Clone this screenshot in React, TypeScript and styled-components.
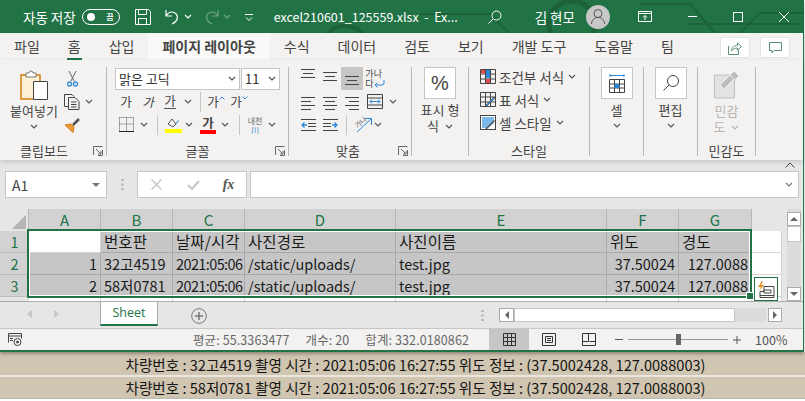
import React from 'react'
import styled, { createGlobalStyle } from 'styled-components'

const FONT = `'Noto Sans CJK KR', 'Noto Sans', sans-serif`
const GREEN = '#217346'
const BLUE = '#2b88d8'

const Global = createGlobalStyle`
    html, body { margin: 0; background: #fff; overflow: hidden; }
    * { box-sizing: border-box; }
    #root { width: 805px; height: 401px; font-family: ${FONT}; }
`

const Window = styled.div`
    position: relative;
    z-index: 2;
    width: 804px;
    height: 352px;
    background: #f3f2f1;
    border-right: 1px solid ${GREEN};
    border-bottom: 2px solid ${GREEN};
    box-shadow: 0 2px 3px rgba(0,0,0,.3);
`

/* title bar */
const TitleBar = styled.header`
    position: relative;
    height: 33px;
    background: ${GREEN};
    color: #fff;
    display: flex;
    align-items: center;
    padding-left: 23px;
    font-size: 12.5px;
    overflow: hidden;
`
const Pattern = styled.svg`
    position: absolute;
    left: 0;
    top: 0;
    pointer-events: none;
`
const TitleItem = styled.div<{ $ml?: number; $big?: boolean }>`
    position: relative;
    flex: none;
    margin-left: ${p => p.$ml ?? 0}px;
    font-size: ${p => (p.$big ? '13.5px' : 'inherit')};
    display: flex;
    align-items: center;
    justify-content: center;
    white-space: pre;
`
const Toggle = styled.div`
    width: 38px;
    height: 16px;
    border: 1px solid #fff;
    border-radius: 8px;
    display: flex;
    align-items: center;
    justify-content: space-between;
    padding: 0 5px 0 4px;
    font-size: 8px;
    font-weight: 700;
    &::before {
        content: '';
        width: 8px;
        height: 8px;
        border-radius: 50%;
        background: #fff;
    }
`
const Avatar = styled.div`
    width: 24px;
    height: 24px;
    border-radius: 50%;
    background: #c8c8c8;
    display: flex;
    align-items: center;
    justify-content: center;
`

/* tabs */
const TabRow = styled.nav`
    height: 27px;
    display: flex;
    align-items: flex-start;
    padding-right: 13px;
    position: relative;
`
const Tab = styled.div<{ $active?: boolean; $current?: boolean }>`
    position: relative;
    height: 27px;
    padding: 0 14px;
    line-height: 26px;
    font-size: 14px;
    color: #444;
    background: ${p => (p.$active ? '#f9f9f8' : 'transparent')};
    font-weight: ${p => (p.$active ? 700 : 400)};
    white-space: pre;
    &::after {
        content: '';
        display: ${p => (p.$current ? 'block' : 'none')};
        position: absolute;
        left: 13px;
        right: 13px;
        bottom: 0;
        height: 2px;
        background: ${GREEN};
    }
`
const TabAction = styled.div<{ $ml?: string }>`
    margin-top: 4px;
    margin-left: ${p => p.$ml ?? '10px'};
    width: 30px;
    height: 21px;
    background: #fff;
    border: 1px solid #e4e4e4;
    border-radius: 2px;
    display: flex;
    align-items: center;
    justify-content: center;
`

/* ribbon */
const Ribbon = styled.section`
    position: relative;
    z-index: 1;
    height: 100px;
    padding-top: 7px;
    display: flex;
    align-items: flex-start;
    background: #f3f2f1;
    box-shadow: 0 2px 5px rgba(0,0,0,.14);
`
const Group = styled.div<{ $w: number }>`
    position: relative;
    flex: none;
    width: ${p => p.$w}px;
    height: 89px;
    border-right: 1px solid #b9b9b8;
    display: flex;
    flex-direction: column;
`
const GroupBody = styled.div`
    height: 78px;
    display: flex;
`
const GroupLabel = styled.div<{ $mr?: number }>`
    margin-top: 1px;
    margin-right: ${p => p.$mr ?? 0}px;
    text-align: center;
    font-size: 13px;
    line-height: 10px;
    height: 10px;
    color: #444;
    white-space: pre;
`
const Launcher = styled.div`
    position: absolute;
    right: 1px;
    bottom: -1px;
    width: 14px;
    height: 12px;
    display: flex;
    align-items: center;
    justify-content: center;
`
const LargeCol = styled.div<{ $w?: number; $pl?: number }>`
    flex: none;
    width: ${p => (p.$w ? `${p.$w}px` : '100%')};
    padding-left: ${p => p.$pl ?? 0}px;
    display: flex;
    flex-direction: column;
    align-items: center;
`
const BigText = styled.div<{ $dim?: boolean }>`
    font-size: 13px;
    line-height: 16px;
    height: 16px;
    color: ${p => (p.$dim ? '#b5b5b5' : '#444')};
    white-space: pre;
    display: flex;
    align-items: center;
    gap: 3px;
`
const ChevRow = styled.div`
    height: 14px;
    display: flex;
    align-items: center;
`
const Tile = styled.div`
    width: 32px;
    height: 32px;
    background: #fff;
    border: 1px solid #c6c6c6;
    display: flex;
    align-items: center;
    justify-content: center;
    margin-bottom: 3px;
`
const Percent = styled.span`
    font-family: 'Liberation Sans', sans-serif;
    font-size: 20px;
    color: #444;
`
const Rows = styled.div<{ $pl?: number; $mt?: number }>`
    display: grid;
    grid-auto-rows: 23px;
    padding-left: ${p => p.$pl ?? 0}px;
    margin-top: ${p => p.$mt ?? 0}px;
`
const Row = styled.div`
    display: flex;
    align-items: center;
`
const Tool = styled.div<{ $w: number; $on?: boolean; $ml?: number }>`
    flex: none;
    width: ${p => p.$w}px;
    height: 23px;
    margin-left: ${p => p.$ml ?? 0}px;
    display: flex;
    align-items: center;
    justify-content: center;
    background: ${p => (p.$on ? '#c6c6c6' : 'transparent')};
    font-size: 12.5px;
    color: #444;
    position: relative;
`
const VSep = styled.div<{ $mx: number }>`
    flex: none;
    width: 1px;
    height: 20px;
    background: #c6c6c6;
    margin: 0 ${p => p.$mx}px;
`
const Combo = styled.div<{ $w: number; $ml?: number }>`
    flex: none;
    width: ${p => p.$w}px;
    height: 22px;
    margin-left: ${p => p.$ml ?? 0}px;
    background: #fff;
    border: 1px solid #c6c6c6;
    display: flex;
    align-items: center;
    justify-content: space-between;
    padding: 0 3px;
    font-size: 13px;
    color: #333;
`
const GlyphUnder = styled.span`
    border-bottom: 1px solid #555;
    line-height: 14px;
`
const Caret = styled.svg`
    margin-bottom: 8px;
`
const Swatch = styled.div<{ $c: string }>`
    display: flex;
    flex-direction: column;
    align-items: center;
    width: 16px;
    line-height: 14px;
    font-weight: 700;
    &::after {
        content: '';
        width: 16px;
        height: 4px;
        background: ${p => p.$c};
    }
`
const TinyStack = styled.div`
    font-size: 8px;
    line-height: 9px;
    color: #666;
    text-align: center;
`
const TinyBlue = styled.div`
    color: ${BLUE};
`
const WrapStack = styled.div`
    font-size: 9px;
    line-height: 10px;
    color: #444;
    display: flex;
    flex-direction: column;
    align-items: flex-start;
`
const WrapLine = styled.div`
    display: flex;
    align-items: center;
`
const Slant = styled.span`
    font-size: 7px;
    color: #666;
    transform: rotate(-40deg);
    position: absolute;
    left: 2px;
    top: 4px;
`
const StyleText = styled.div`
    margin-left: 3px;
    font-size: 13.5px;
    color: #444;
    display: flex;
    align-items: center;
    gap: 4px;
    white-space: pre;
`
const Collapse = styled.div`
    margin-left: auto;
    margin-right: 8px;
    margin-top: 82px;
`

/* formula bar */
const FormulaArea = styled.section`
    height: 49px;
    background: #e6e6e6;
    display: flex;
    align-items: flex-start;
    padding: 11px 0 0 5px;
`
const NameBox = styled.div`
    width: 102px;
    height: 27px;
    background: #fff;
    border: 1px solid #c6c6c6;
    display: flex;
    align-items: center;
    justify-content: space-between;
    padding: 0 6px;
    font-size: 14px;
    color: #444;
`
const Grip = styled.div`
    margin: 0 13px 0 14px;
    height: 27px;
    display: flex;
    align-items: center;
`
const FormulaTools = styled.div`
    width: 110px;
    height: 27px;
    background: #fff;
    border: 1px solid #c6c6c6;
    display: grid;
    grid-template-columns: 37px 36px 1fr;
    align-items: center;
    justify-items: center;
`
const Fx = styled.span`
    font-family: 'Liberation Serif', serif;
    font-style: italic;
    font-weight: 700;
    font-size: 14px;
    color: #555;
`
const FormulaInput = styled.div`
    margin-left: 3px;
    width: 549px;
    height: 27px;
    background: #fff;
    border: 1px solid #c6c6c6;
    display: flex;
    align-items: center;
    justify-content: flex-end;
    padding-right: 5px;
`

/* sheet */
const SheetArea = styled.section`
    height: 92px;
    background: #e6e6e6;
    display: flex;
`
const Sheet = styled.div`
    position: relative;
    width: 782px;
    height: 92px;
    overflow: hidden;
    background: #fff;
    display: grid;
    grid-template-columns: 29px 72px 72px 72px 151px 211px 72px 73px 30px;
    grid-template-rows: 22px 22px 22px 22px 22px;
    font-size: 14.5px;
    color: #1a1a1a;
`
const Corner = styled.div`
    background: #e6e6e6;
    position: relative;
    border-right: 1px solid #b5b5b5;
    &::after {
        content: '';
        position: absolute;
        right: 2px;
        bottom: 2px;
        border-style: solid;
        border-width: 0 0 14px 14px;
        border-color: transparent transparent #b4b4b4 transparent;
    }
`
const ColHead = styled.div<{ $off?: boolean }>`
    background: ${p => (p.$off ? '#e6e6e6' : '#d2d2d2')};
    border-right: 1px solid ${p => (p.$off ? '#e6e6e6' : '#b5b5b5')};
    color: ${GREEN};
    text-align: center;
    line-height: 22px;
    font-size: 15px;
`
const RowHead = styled.div<{ $off?: boolean }>`
    background: ${p => (p.$off ? '#e6e6e6' : '#d2d2d2')};
    border-bottom: 1px solid #bdbdbd;
    color: ${GREEN};
    text-align: center;
    line-height: 21px;
    font-size: 14.5px;
`
const Cell = styled.div<{ $sel?: boolean; $right?: boolean; $head?: boolean; $tight?: boolean }>`
    background: ${p => (p.$sel ? '#c6c6c6' : '#fff')};
    border-right: 1px solid ${p => (p.$sel ? '#a9a9a9' : '#d4d4d4')};
    border-bottom: 1px solid ${p => (p.$sel ? '#a9a9a9' : '#d4d4d4')};
    text-align: ${p => (p.$right ? 'right' : 'left')};
    padding: 0 3px;
    line-height: 21px;
    white-space: nowrap;
    overflow: hidden;
    font-size: ${p => (p.$head ? '15.5px' : '14.5px')};
    letter-spacing: ${p => (p.$head ? '0.1px' : p.$tight ? '-0.6px' : '0')};
`
const Selection = styled.div`
    position: absolute;
    left: 27px;
    top: 20px;
    width: 725px;
    height: 69px;
    border: 2px solid ${GREEN};
    box-shadow: inset 0 0 0 1px #fff;
    pointer-events: none;
`
const Handle = styled.div`
    position: absolute;
    left: 747px;
    top: 84px;
    width: 6px;
    height: 6px;
    background: ${GREEN};
    outline: 1px solid #fff;
`
const QuickButton = styled.div`
    position: absolute;
    left: 754px;
    top: 68px;
    width: 24px;
    height: 24px;
    background: #fff;
    border: 1px solid ${GREEN};
    display: flex;
    align-items: center;
    justify-content: center;
`
const VScroll = styled.div`
    margin-left: 5px;
    width: 14px;
    height: 92px;
    padding-top: 3px;
    display: flex;
    flex-direction: column;
    background: #dcdcdc;
`
const ScrollBtn = styled.div<{ $w?: number; $ml?: number }>`
    flex: none;
    width: ${p => (p.$w ? `${p.$w}px` : '100%')};
    height: 14px;
    margin-left: ${p => p.$ml ?? 0}px;
    background: #fff;
    border: 1px solid #ababab;
    display: flex;
    align-items: center;
    justify-content: center;
`
const ScrollThumb = styled.div`
    flex: none;
    width: 100%;
    height: 16px;
    background: #fff;
    border: 1px solid #c6c6c6;
`
const ScrollGap = styled.div`
    flex: 1;
`

/* sheet tabs */
const TabsBar = styled.section`
    height: 28px;
    display: flex;
    align-items: flex-start;
    background: #e6e6e6;
    border-top: 1px solid #ababab;
    border-bottom: 1px solid #c6c6c6;
`
const NavArrows = styled.div`
    width: 100px;
    height: 24px;
    display: flex;
    align-items: center;
    padding-left: 27px;
    gap: 22px;
`
const SheetTab = styled.div`
    margin-top: -1px;
    width: 58px;
    height: 25px;
    background: #fff;
    border: 1px solid #ababab;
    border-bottom: 2px solid ${GREEN};
    color: ${GREEN};
    font-size: 12.5px;
    font-family: 'Open Sans', sans-serif;
    text-align: center;
    line-height: 22px;
`
const AddSheet = styled.div`
    margin-left: 33px;
    margin-top: 3px;
`
const HScroll = styled.div`
    margin-left: auto;
    margin-right: 21px;
    margin-top: 6px;
    display: flex;
    align-items: center;
`
const HGrip = styled.div`
    margin-right: 15px;
    display: flex;
`
const HTrack = styled.div`
    width: 252px;
    height: 14px;
    background: #dcdcdc;
`
const HThumb = styled.div`
    width: 221px;
    height: 14px;
    background: #fff;
    border: 1px solid #c6c6c6;
`

/* status bar */
const StatusBar = styled.footer`
    height: 21px;
    display: flex;
    align-items: center;
    font-size: 12.5px;
    color: #666;
    padding-left: 8px;
`
const Stat = styled.span<{ $ml: number }>`
    margin-left: ${p => p.$ml}px;
    white-space: pre;
    letter-spacing: 0.1px;
`
const ViewBtn = styled.div<{ $on?: boolean; $first?: boolean }>`
    flex: none;
    width: 40px;
    height: 21px;
    margin-left: ${p => (p.$first ? 'auto' : '0')};
    background: ${p => (p.$on ? '#c6c6c6' : 'transparent')};
    display: flex;
    align-items: center;
    justify-content: center;
`
const Zoom = styled.div`
    flex: none;
    width: 194px;
    padding-left: 6px;
    display: flex;
    align-items: center;
    color: #555;
`
const Slider = styled.div`
    position: relative;
    width: 100px;
    height: 1px;
    margin: 0 5px;
    background: #999;
    &::after {
        content: '';
        position: absolute;
        left: 48px;
        top: -5px;
        width: 5px;
        height: 11px;
        background: #666;
    }
`

/* log rows under the window */
const Log = styled.div`
    position: relative;
    z-index: 1;
    display: flex;
    flex-direction: column;
`
const LogRow = styled.div`
    background: #d0c5b0;
    color: #141414;
    text-align: center;
    font-size: 14.6px;
    white-space: pre;
    padding-left: 26px;
    height: 22px;
    line-height: 21px;
    border-bottom: 1px solid #b9b9b5;
    &:first-child {
        height: 25px;
        padding-top: 2px;
        border-bottom: 2px solid #e9e6e0;
    }
`

/* icons */
const Chev = ({ c = '#555' }: { c?: string }) => (
    <svg width="8" height="5" viewBox="0 0 8 5"><path d="M1 1l3 3 3-3" fill="none" stroke={c} strokeWidth="1.2" /></svg>
)
const LaunchIcon = () => (
    <svg width="10" height="10" viewBox="0 0 10 10" fill="none" stroke="#666"><path d="M.5 9V.5H9.500M9.500 4v5.500H5M3 3l5 5M8 5v3H5" /></svg>
)
const Lines = ({ rows, w = 14, y = 0 }: { rows: [number, number][]; w?: number; y?: number }) => (
    <svg width={w} height="16" viewBox={`0 0 ${w} 16`} style={{ transform: `translateY(${y}px)` }}>
        {rows.map(([a, b], i) => <rect key={i} x={a} y={2 + i * 4} width={b - a} height="1" fill="#444" />)}
    </svg>
)
const Indent = ({ flip }: { flip?: boolean }) => (
    <svg width="15" height="14" viewBox="0 0 15 14" style={{ transform: flip ? 'scaleX(-1)' : undefined }}>
        <path d="M0 1.500h15M7 5.500h8M7 8.500h8M0 12.500h15" stroke="#444" fill="none" />
        <path d="M1 7h5M3.500 4.500L1 7l2.500 2.500" stroke={BLUE} fill="none" strokeWidth="1.300" />
    </svg>
)
const GridIcon = ({ children }: { children: React.ReactNode }) => (
    <svg width="16" height="15" viewBox="0 0 16 15" fill="none">
        <path d="M.5.500h15v14H.5zM.5 5h15M.5 10h15M5.500.500v14M10.500.500v14" stroke="#444" />
        {children}
    </svg>
)
const GripDots = () => (
    <svg width="3" height="11" viewBox="0 0 3 11" fill="#bbb"><rect width="3" height="2" /><rect y="4.500" width="3" height="2" /><rect y="9" width="3" height="2" /></svg>
)
const Launch = () => <Launcher><LaunchIcon /></Launcher>

const COLS = ['A', 'B', 'C', 'D', 'E', 'F', 'G']
const DATA = [
    ['1', '32고4519', '2021:05:06', '/static/uploads/', 'test.jpg', '37.50024', '127.0088'],
    ['2', '58저0781', '2021:05:06', '/static/uploads/', 'test.jpg', '37.50024', '127.0088'],
]
const HEADINGS = ['', '번호판', '날짜/시각', '사진경로', '사진이름', '위도', '경도']
const TABS = ['파일', '홈', '삽입', '페이지 레이아웃', '수식', '데이터', '검토', '보기', '개발 도구', '도움말', '팀']
const LOGS = [
    '차량번호 : 32고4519 촬영 시간 : 2021:05:06 16:27:55 위도 정보 : (37.5002428, 127.0088003)',
    '차량번호 : 58저0781 촬영 시간 : 2021:05:06 16:27:55 위도 정보 : (37.5002428, 127.0088003)',
]

export default function App() {
    return (
        <>
            <Global />
            <Window>
                <TitleBar>
                    <Pattern width="804" height="33" viewBox="0 0 804 33" fill="none" stroke="#1c6139" strokeWidth="2">
                        <circle cx="572" cy="24" r="23" strokeWidth="5" />
                        <circle cx="345" cy="50" r="24" strokeWidth="4" />
                        <path d="M420 14h70l19 19M640 4h50l25 29M690 24h110M740 33l20-20h44" />
                    </Pattern>
                    <TitleItem $big>자동 저장</TitleItem>
                    <TitleItem $ml={6}><Toggle>끔</Toggle></TitleItem>
                    <TitleItem $ml={15}>
                        <svg width="16" height="16" viewBox="0 0 16 16" fill="none" stroke="#fff"><path d="M.5.500h13l2 2v13H.5zM3.500.500v5h8v-5M3.500 15.500v-6h8v6" /></svg>
                    </TitleItem>
                    <TitleItem $ml={14}>
                        <svg width="15" height="16" viewBox="0 0 15 16" fill="none" stroke="#fff" strokeWidth="1.200"><path d="M1 1v6h6M1 7c2-4 6-5 9-3 4 3 3 8-3 11" /></svg>
                    </TitleItem>
                    <TitleItem $ml={4}><Chev c="#fff" /></TitleItem>
                    <TitleItem $ml={12}>
                        <svg width="15" height="16" viewBox="0 0 15 16" fill="none" stroke="#6fa288" strokeWidth="1.200"><path d="M14 1v6H8M14 7c-2-4-6-5-9-3-4 3-3 8 3 11" /></svg>
                    </TitleItem>
                    <TitleItem $ml={4}><Chev c="#6fa288" /></TitleItem>
                    <TitleItem $ml={14}>
                        <svg width="8" height="8" viewBox="0 0 8 8" fill="none" stroke="#fff"><path d="M0 1.500h8M1 4.500l3 3 3-3" /></svg>
                    </TitleItem>
                    <TitleItem $ml={21}>excel210601_125559.xlsx  -  Ex...</TitleItem>
                    <TitleItem $ml={30}>
                        <svg width="14" height="14" viewBox="0 0 14 14" fill="none" stroke="#fff"><circle cx="8.500" cy="5.500" r="4.500" /><path d="M5 9l-4.500 4.500" /></svg>
                    </TitleItem>
                    <TitleItem $ml={33} $big>김 현모</TitleItem>
                    <TitleItem $ml={11}>
                        <Avatar>
                            <svg width="14" height="15" viewBox="0 0 14 15" fill="none" stroke="#555"><circle cx="7" cy="4.500" r="4" /><path d="M.5 15c0-4 3-6.500 6.500-6.500s6.500 2.500 6.500 6.500" /></svg>
                        </Avatar>
                    </TitleItem>
                    <TitleItem $ml={28}>
                        <svg width="14" height="11" viewBox="0 0 14 11" fill="none" stroke="#fff"><path d="M.5.500h13v10H.5zM.5 2.500h13M7 9V4.500M5 6.500l2-2 2 2" /></svg>
                    </TitleItem>
                    <TitleItem $ml={36}>
                        <svg width="9" height="1" viewBox="0 0 9 1"><rect width="9" height="1" fill="#fff" /></svg>
                    </TitleItem>
                    <TitleItem $ml={36}>
                        <svg width="10" height="10" viewBox="0 0 10 10" fill="none" stroke="#fff"><rect x=".5" y=".5" width="9" height="9" /></svg>
                    </TitleItem>
                    <TitleItem $ml={36}>
                        <svg width="10" height="10" viewBox="0 0 10 10" fill="none" stroke="#fff"><path d="M0 0l10 10M10 0L0 10" /></svg>
                    </TitleItem>
                </TitleBar>

                <TabRow>
                    {TABS.map((t, i) => <Tab key={t} $active={i === 3} $current={i === 1}>{t}</Tab>)}
                    <TabAction $ml="auto">
                        <svg width="14" height="14" viewBox="0 0 14 14" fill="none" stroke="#5a8f73"><path d="M.5 5v8.500h10V9M3.500 10c0-4 3-5.500 6-5.500V2l4 3.500-4 3.500V7C7 7 5 8 3.500 10z" /></svg>
                    </TabAction>
                    <TabAction>
                        <svg width="13" height="13" viewBox="0 0 13 13" fill="none" stroke="#5a8f73"><path d="M.5 1.500h12v8H5l-2 2.500V9.500H.5z" /></svg>
                    </TabAction>
                </TabRow>

                <Ribbon>
                    <Group $w={107}>
                        <GroupBody>
                            <LargeCol $w={64} $pl={4}>
                                <svg width="28" height="31" viewBox="0 0 28 31" style={{ marginTop: 3, marginBottom: 2 }}>
                                    <path d="M1 5h19v24H1z" fill="#fdf0d5" stroke="#d47c15" strokeWidth="1.500" />
                                    <path d="M6 3h3a2 2 0 0 1 4 0h3v4H6z" fill="#fff" stroke="#777" />
                                    <path d="M13.500 11.500h14v18h-14z" fill="#fff" stroke="#444" />
                                </svg>
                                <BigText>붙여넣기</BigText>
                                <ChevRow><Chev /></ChevRow>
                            </LargeCol>
                            <Rows>
                                <Row>
                                    <Tool $w={16}>
                                        <svg width="11" height="16" viewBox="0 0 11 16" fill="none"><path d="M2 0l5 10M9 0L4 10" stroke="#666" /><circle cx="2.500" cy="13" r="2" stroke={BLUE} strokeWidth="1.300" /><circle cx="8.500" cy="13" r="2" stroke={BLUE} strokeWidth="1.300" /></svg>
                                    </Tool>
                                </Row>
                                <Row>
                                    <Tool $w={16}>
                                        <svg width="16" height="16" viewBox="0 0 16 16" fill="none" stroke="#444"><path d="M4 12.500H.5V.5H8l2 2M4.500 3.500H11l4 4v8H4.500zM7 8h5.500M7 10.500h5.500M7 13h5.500" /></svg>
                                    </Tool>
                                    <Tool $w={18}><Chev /></Tool>
                                </Row>
                                <Row>
                                    <Tool $w={16}>
                                        <svg width="16" height="16" viewBox="0 0 16 16" fill="none"><path d="M1 8l6-1 3 3-1 5.500L1 8z" fill="#ed9a3a" stroke="#d47c15" /><path d="M9 8l6-6" stroke="#555" strokeWidth="2.500" /></svg>
                                    </Tool>
                                </Row>
                            </Rows>
                        </GroupBody>
                        <GroupLabel $mr={18}>클립보드</GroupLabel>
                        <Launch />
                    </Group>

                    <Group $w={182}>
                        <GroupBody>
                            <Rows $pl={8}>
                                <Row>
                                    <Combo $w={125}>맑은 고딕<Chev /></Combo>
                                    <Combo $w={39} $ml={1}>11<Chev /></Combo>
                                </Row>
                                <Row>
                                    <Tool $w={22}>가</Tool>
                                    <Tool $w={22}><i>가</i></Tool>
                                    <Tool $w={22}><GlyphUnder>가</GlyphUnder></Tool>
                                    <Tool $w={14}><Chev /></Tool>
                                    <VSep $mx={5} />
                                    <Tool $w={20}>가<Caret width="6" height="4" viewBox="0 0 6 4"><path d="M.5 3.500L3 1l2.500 2.500" stroke={BLUE} fill="none" /></Caret></Tool>
                                    <Tool $w={20} $ml={3}>가<Caret width="6" height="4" viewBox="0 0 6 4"><path d="M.5.500L3 3 5.500.500" stroke={BLUE} fill="none" /></Caret></Tool>
                                </Row>
                                <Row>
                                    <Tool $w={22}>
                                        <svg width="15" height="15" viewBox="0 0 15 15" fill="none"><path d="M.5.500h14v13M.5.500v13M.5 7h14M7.500.500v13" stroke="#555" strokeDasharray="1 1" /><path d="M0 14.500h15" stroke="#222" /></svg>
                                    </Tool>
                                    <Tool $w={14}><Chev /></Tool>
                                    <VSep $mx={6} />
                                    <Tool $w={18}>
                                        <svg width="17" height="16" viewBox="0 0 17 16" fill="none"><path d="M3 7l4-5 4 5-3 3z" stroke="#555" /><path d="M12 7a2 2 0 0 1 2-3" stroke={BLUE} /><rect y="12" width="17" height="4" fill="#ffff00" /></svg>
                                    </Tool>
                                    <Tool $w={14}><Chev /></Tool>
                                    <Tool $w={18} $ml={3}><Swatch $c="#ff0000">가</Swatch></Tool>
                                    <Tool $w={16}><Chev /></Tool>
                                    <VSep $mx={6} />
                                    <Tool $w={18}><TinyStack>내천<TinyBlue>川</TinyBlue></TinyStack></Tool>
                                    <Tool $w={16}><Chev /></Tool>
                                </Row>
                            </Rows>
                        </GroupBody>
                        <GroupLabel>글꼴</GroupLabel>
                        <Launch />
                    </Group>

                    <Group $w={123}>
                        <GroupBody>
                            <Rows $pl={8}>
                                <Row>
                                    <Tool $w={22}><Lines rows={[[0, 14], [2, 12], [0, 14]]} y={-4} /></Tool>
                                    <Tool $w={22}><Lines rows={[[0, 14], [2, 12], [0, 14]]} y={-1} /></Tool>
                                    <Tool $w={22} $on><Lines rows={[[0, 14], [2, 12], [0, 14]]} y={3} /></Tool>
                                    <Tool $w={24}>
                                        <WrapStack>
                                            가나
                                            <WrapLine>다<svg width="11" height="8" viewBox="0 0 11 8" fill="none" stroke={BLUE}><path d="M10 0v3a2 2 0 0 1-2 2H1M3.500 2.500L1 5l2.500 2.500" /></svg></WrapLine>
                                        </WrapStack>
                                    </Tool>
                                </Row>
                                <Row>
                                    <Tool $w={22}><Lines rows={[[0, 14], [0, 10], [0, 14], [0, 10]]} y={1} /></Tool>
                                    <Tool $w={22}><Lines rows={[[0, 14], [2, 12], [0, 14], [2, 12]]} y={1} /></Tool>
                                    <Tool $w={22}><Lines rows={[[0, 14], [4, 14], [0, 14], [4, 14]]} y={1} /></Tool>
                                    <Tool $w={24}>
                                        <svg width="16" height="15" viewBox="0 0 16 15" fill="none"><path d="M.5.500h15v14H.5z" stroke="#444" /><path d="M.5 4h15M.5 11h15" stroke="#444" /><path d="M3 7.500h10M5 5.500l-2 2 2 2M11 5.500l2 2-2 2" stroke={BLUE} /></svg>
                                    </Tool>
                                    <Tool $w={12}><Chev /></Tool>
                                </Row>
                                <Row>
                                    <Tool $w={22}><Indent /></Tool>
                                    <Tool $w={22}><Indent flip /></Tool>
                                    <VSep $mx={5} />
                                    <Tool $w={22}>
                                        <Slant>가나</Slant>
                                        <svg width="22" height="18" viewBox="0 0 22 18" fill="none"><path d="M5 16L19 3M13 2.500h6.500V9" stroke={BLUE} /></svg>
                                    </Tool>
                                    <Tool $w={8}><Chev /></Tool>
                                </Row>
                            </Rows>
                        </GroupBody>
                        <GroupLabel $mr={4}>맞춤</GroupLabel>
                        <Launch />
                    </Group>

                    <Group $w={57}>
                        <LargeCol>
                            <Tile><Percent>%</Percent></Tile>
                            <BigText>표시 형</BigText>
                            <BigText>식 <Chev /></BigText>
                        </LargeCol>
                    </Group>

                    <Group $w={121}>
                        <GroupBody>
                            <Rows $pl={11} $mt={-2}>
                                <Row>
                                    <GridIcon><rect x="6" y="1" width="4" height="8" fill={BLUE} /><rect x="6" y="10" width="4" height="4" fill="#e8474c" /><rect x="1" y="1" width="4" height="3.500" fill="#e8474c" /></GridIcon>
                                    <StyleText>조건부 서식<Chev /></StyleText>
                                </Row>
                                <Row>
                                    <GridIcon><path d="M5 14L14 5l1 1-8 8z" fill={BLUE} stroke="#444" strokeWidth=".5" /></GridIcon>
                                    <StyleText>표 서식<Chev /></StyleText>
                                </Row>
                                <Row>
                                    <svg width="16" height="15" viewBox="0 0 16 15" fill="none"><rect x=".5" y=".5" width="15" height="14" fill="#fff" stroke="#444" /><path d="M2 2h12v6l-6 5H2z" fill="#7db7e8" /><path d="M5 14L14 5l1 1-8 8z" fill="#555" /></svg>
                                    <StyleText>셀 스타일<Chev /></StyleText>
                                </Row>
                            </Rows>
                        </GroupBody>
                        <GroupLabel>스타일</GroupLabel>
                    </Group>

                    <Group $w={54}>
                        <LargeCol>
                            <Tile>
                                <svg width="16" height="19" viewBox="0 0 16 19" fill="none"><path d="M1 1.500h14M1 0v3M15 0v3" stroke={BLUE} /><path d="M.5 5.500h15v13H.5zM.5 10h15M.5 14h15M5.500 5.500v13M10.500 5.500v13" stroke="#444" /><rect x="5.500" y="10" width="5" height="4" fill={BLUE} /></svg>
                            </Tile>
                            <BigText>셀</BigText>
                            <ChevRow><Chev /></ChevRow>
                        </LargeCol>
                    </Group>

                    <Group $w={54}>
                        <LargeCol>
                            <Tile>
                                <svg width="16" height="16" viewBox="0 0 16 16" fill="none" stroke="#444"><circle cx="10" cy="6" r="5.500" /><path d="M6 10l-5.500 5.500" /></svg>
                            </Tile>
                            <BigText>편집</BigText>
                            <ChevRow><Chev /></ChevRow>
                        </LargeCol>
                    </Group>

                    <Group $w={58}>
                        <GroupBody>
                            <LargeCol>
                                <svg width="27" height="29" viewBox="0 0 27 29" style={{ marginTop: 3, marginBottom: 4 }}>
                                    <path d="M1.500 5h20v23h-20z" fill="#e3e3e3" stroke="#c0c0c0" />
                                    <path d="M7 15L17 5l4 4-10 10zM17 5l4-4 5 5-4 4" fill="#bdbdbd" stroke="#f3f2f1" />
                                </svg>
                                <BigText $dim>민감</BigText>
                                <BigText $dim>도 <Chev c="#b5b5b5" /></BigText>
                            </LargeCol>
                        </GroupBody>
                        <GroupLabel>민감도</GroupLabel>
                    </Group>

                    <Collapse>
                        <svg width="10" height="6" viewBox="0 0 10 6" fill="none" stroke="#444"><path d="M.5 5.500L5 1l4.500 4.500" /></svg>
                    </Collapse>
                </Ribbon>

                <FormulaArea>
                    <NameBox>
                        A1
                        <svg width="8" height="4" viewBox="0 0 8 4"><path d="M0 0h8L4 4z" fill="#777" /></svg>
                    </NameBox>
                    <Grip><GripDots /></Grip>
                    <FormulaTools>
                        <svg width="11" height="11" viewBox="0 0 11 11" fill="none" stroke="#c8c8c8" strokeWidth="1.500"><path d="M.5.500l10 10M10.500.500l-10 10" /></svg>
                        <svg width="13" height="10" viewBox="0 0 13 10" fill="none" stroke="#c8c8c8" strokeWidth="2"><path d="M1 5l4 4 7-8" /></svg>
                        <Fx>fx</Fx>
                    </FormulaTools>
                    <FormulaInput><Chev c="#777" /></FormulaInput>
                </FormulaArea>

                <SheetArea>
                    <Sheet>
                        <Corner />
                        {COLS.map(c => <ColHead key={c}>{c}</ColHead>)}
                        <ColHead $off />

                        <RowHead>1</RowHead>
                        {HEADINGS.map((h, i) => <Cell key={i} $sel={i > 0} $head>{h}</Cell>)}
                        <Cell />

                        {DATA.map((row, r) => (
                            <React.Fragment key={r}>
                                <RowHead>{r + 2}</RowHead>
                                {row.map((v, i) => <Cell key={i} $sel $right={i === 0 || i >= 5} $tight={i === 2}>{v}</Cell>)}
                                <Cell />
                            </React.Fragment>
                        ))}

                        <RowHead $off />
                        {COLS.map(c => <Cell key={c} />)}
                        <Cell />

                        <Selection />
                        <Handle />
                        <QuickButton>
                            <svg width="18" height="17" viewBox="0 0 18 17" fill="none"><path d="M5 0L1 6h3L2 10l5-6H4l2-4z" fill="#e98a1b" /><path d="M7 5.500h10v11H3v-6h4zM7 9h7v3H7zM3 14.500h14" stroke="#444" /></svg>
                        </QuickButton>
                    </Sheet>
                    <VScroll>
                        <ScrollBtn>
                            <svg width="8" height="4" viewBox="0 0 8 4"><path d="M4 0l4 4H0z" fill="#666" /></svg>
                        </ScrollBtn>
                        <ScrollThumb />
                        <ScrollGap />
                        <ScrollBtn>
                            <svg width="8" height="4" viewBox="0 0 8 4"><path d="M0 0h8L4 4z" fill="#666" /></svg>
                        </ScrollBtn>
                    </VScroll>
                </SheetArea>

                <TabsBar>
                    <NavArrows>
                        <svg width="5" height="8" viewBox="0 0 5 8"><path d="M5 0v8L0 4z" fill="#c6c6c6" /></svg>
                        <svg width="5" height="8" viewBox="0 0 5 8"><path d="M0 0v8l5-4z" fill="#c6c6c6" /></svg>
                    </NavArrows>
                    <SheetTab>Sheet</SheetTab>
                    <AddSheet>
                        <svg width="16" height="16" viewBox="0 0 16 16" fill="none" stroke="#777"><circle cx="8" cy="8" r="7.300" /><path d="M4 8h8M8 4v8" strokeWidth="1.500" /></svg>
                    </AddSheet>
                    <HScroll>
                        <HGrip><GripDots /></HGrip>
                        <ScrollBtn $w={15}>
                            <svg width="4" height="8" viewBox="0 0 4 8"><path d="M4 0v8L0 4z" fill="#666" /></svg>
                        </ScrollBtn>
                        <HTrack><HThumb /></HTrack>
                        <ScrollBtn $w={14} $ml={2}>
                            <svg width="4" height="8" viewBox="0 0 4 8"><path d="M0 0v8l4-4z" fill="#666" /></svg>
                        </ScrollBtn>
                    </HScroll>
                </TabsBar>

                <StatusBar>
                    <svg width="14" height="13" viewBox="0 0 14 13" fill="none" stroke="#444"><path d="M.5 9.500v-9h13v5M.5 3h13M2 5.500h3M2 7.500h3" /><circle cx="9.500" cy="9" r="3.500" /><circle cx="9.500" cy="9" r="1" fill="#444" /></svg>
                    <Stat $ml={171}>평균: 55.3363477</Stat>
                    <Stat $ml={16}>개수: 20</Stat>
                    <Stat $ml={16}>합계: 332.0180862</Stat>
                    <ViewBtn $on $first>
                        <svg width="13" height="13" viewBox="0 0 13 13" fill="none" stroke="#333"><path d="M.5.500h12v12H.5zM.5 4.500h12M.5 8.500h12M4.500.500v12M8.500.500v12" /></svg>
                    </ViewBtn>
                    <ViewBtn>
                        <svg width="14" height="13" viewBox="0 0 14 13" fill="none" stroke="#333"><path d="M.5.500h13v12H.5zM3.500 3.500h7v6h-7zM5 5.500h4M5 7.500h4" /></svg>
                    </ViewBtn>
                    <ViewBtn>
                        <svg width="14" height="13" viewBox="0 0 14 13" fill="none" stroke="#333"><path d="M.5.500h13v12H.5zM.5 8.500h6V.500M7.500 8.500h6" /></svg>
                    </ViewBtn>
                    <Zoom>
                        <svg width="8" height="1" viewBox="0 0 8 1"><rect width="8" height="1" fill="#555" /></svg>
                        <Slider />
                        <svg width="8" height="8" viewBox="0 0 8 8"><path d="M0 4h8M4 0v8" stroke="#555" /></svg>
                        <Stat $ml={14}>100%</Stat>
                    </Zoom>
                </StatusBar>
            </Window>
            <Log>
                {LOGS.map(l => <LogRow key={l}>{l}</LogRow>)}
            </Log>
        </>
    )
}
